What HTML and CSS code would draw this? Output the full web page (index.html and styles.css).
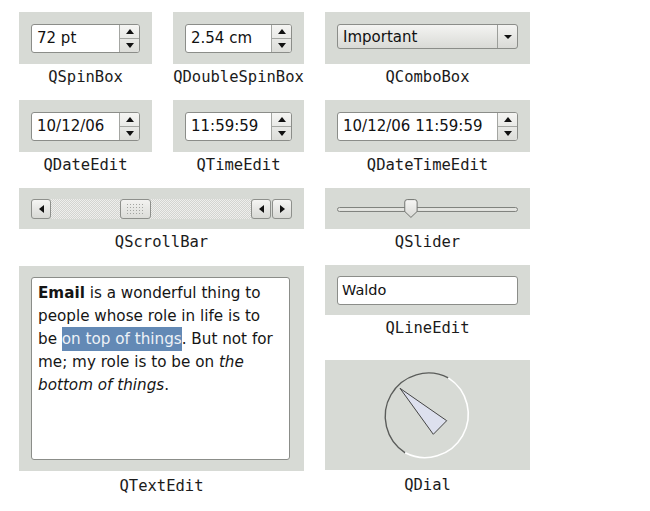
FILE: index.html
```html
<!DOCTYPE html>
<html lang="en">
<head>
  <meta charset="UTF-8" />
  <title>Widget Gallery</title>
  <link rel="stylesheet" href="styles.css">
</head>
<body>
  <div class="gallery">
    <div class="cell">
      <div class="panel">
        <div class="spin"><span class="field">72 pt</span><span class="arrows"><i class="up"></i><i class="down"></i></span></div>
      </div>
      <div class="caption">QSpinBox</div>
    </div>

    <div class="cell">
      <div class="panel">
        <div class="spin"><span class="field">2.54 cm</span><span class="arrows"><i class="up"></i><i class="down"></i></span></div>
      </div>
      <div class="caption">QDoubleSpinBox</div>
    </div>

    <div class="cell">
      <div class="panel">
        <div class="combo"><span class="field">Important</span><span class="drop"><i class="down"></i></span></div>
      </div>
      <div class="caption">QComboBox</div>
    </div>

    <div class="cell">
      <div class="panel">
        <div class="spin"><span class="field">10/12/06</span><span class="arrows"><i class="up"></i><i class="down"></i></span></div>
      </div>
      <div class="caption">QDateEdit</div>
    </div>

    <div class="cell">
      <div class="panel">
        <div class="spin"><span class="field">11:59:59</span><span class="arrows"><i class="up"></i><i class="down"></i></span></div>
      </div>
      <div class="caption">QTimeEdit</div>
    </div>

    <div class="cell">
      <div class="panel">
        <div class="spin"><span class="field">10/12/06 11:59:59</span><span class="arrows"><i class="up"></i><i class="down"></i></span></div>
      </div>
      <div class="caption">QDateTimeEdit</div>
    </div>

    <div class="cell wide">
      <div class="panel short">
        <div class="scrollbar">
          <span class="sb-btn"><i class="left"></i></span>
          <span class="sb-track"><span class="sb-handle"><span class="grip"></span></span></span>
          <span class="sb-btn"><i class="left"></i></span>
          <span class="sb-btn"><i class="right"></i></span>
        </div>
      </div>
      <div class="caption">QScrollBar</div>
    </div>

    <div class="cell">
      <div class="panel short">
        <svg class="slider" width="183" height="20" viewBox="0 0 183 20">
          <defs>
            <linearGradient id="knob" x1="0" y1="0" x2="0" y2="1">
              <stop offset="0" stop-color="#f6f6f4" />
              <stop offset="1" stop-color="#d9dad6" />
            </linearGradient>
          </defs>
          <rect x="0.5" y="8.5" width="182" height="4" rx="2" fill="#e4e5e1" stroke="#7d7f7b" />
          <path d="M68.5 3 Q68.5 0.5 71 0.5 H78.5 Q81 0.5 81 3 V12.5 L74.75 18.5 L68.5 12.5 Z" fill="url(#knob)" stroke="#6f716d" />
        </svg>
      </div>
      <div class="caption">QSlider</div>
    </div>

    <div class="cell wide">
      <div class="panel tall">
        <div class="textedit"><b>Email</b> is a wonderful thing to<br>
          people whose role in life is to<br>
          be <span class="sel">on top of things</span>. But not for<br>
          me; my role is to be on <i>the</i><br>
          <i>bottom of things</i>.</div>
      </div>
      <div class="caption low">QTextEdit</div>
    </div>

    <div class="stack">
      <div class="cell line-cell">
        <div class="panel line">
          <div class="lineedit">Waldo</div>
        </div>
        <div class="caption">QLineEdit</div>
      </div>
      <div class="cell">
        <div class="panel dial">
          <svg width="205" height="110" viewBox="0 0 205 110">
            <path d="M80.2 92.8 A43.3 43.3 0 0 1 123.3 17.8" fill="none" stroke="#5a5c5a" stroke-width="1.4" />
            <path d="M123.3 17.8 A43.3 43.3 0 0 1 80.2 92.8" fill="none" stroke="#ffffff" stroke-width="1.6" />
            <polygon points="75,28.3 121.7,60.7 108.3,74.3" fill="#dde0ee" stroke="#444" stroke-width="1" stroke-linejoin="round" />
          </svg>
        </div>
        <div class="caption low">QDial</div>
      </div>
    </div>
  </div>
</body>
</html>
```

FILE: styles.css
```css
body {
  margin: 0;
  background: #fff;
  font-family: "DejaVu Sans", "Liberation Sans", sans-serif;
  color: #111;
}

.gallery {
  display: grid;
  grid-template-columns: 133px 131px 205px;
  grid-template-rows: 88px 88px 77px auto;
  column-gap: 21px;
  padding: 12px 0 0 19px;
}

.wide {
  grid-column: span 2;
}

.stack {
  display: flex;
  flex-direction: column;
}

.line-cell {
  height: 95px;
}

.panel {
  background: #d7dad5;
  height: 52px;
  display: flex;
  align-items: center;
  padding: 0 12px;
}

.panel.short {
  height: 41px;
}

.panel.line {
  height: 50px;
}

.panel.tall {
  height: 205px;
  margin-top: 1px;
  padding: 11px 14px 11px 12px;
  box-sizing: border-box;
  align-items: stretch;
}

.panel.dial {
  height: 110px;
  padding: 0;
}

.caption {
  margin-top: 5px;
  font: 15.5px/17px "DejaVu Sans Mono", monospace;
  text-align: center;
  color: #1b1b1b;
}

.caption.low {
  margin-top: 7px;
}

/* spin boxes and combo */
.spin,
.combo,
.lineedit {
  flex: 1;
  display: flex;
  box-sizing: border-box;
  border: 1px solid #8b8d89;
  border-radius: 3px;
  font-size: 15px;
}

.spin {
  height: 29px;
  background: #fff;
}

.field {
  flex: 1;
  display: flex;
  align-items: center;
  padding-left: 5px;
  white-space: nowrap;
}

.arrows {
  width: 19px;
  display: flex;
  flex-direction: column;
  border-left: 1px solid #a4a6a2;
  background: linear-gradient(#f5f5f3, #dcddd9);
  border-radius: 0 2px 2px 0;
}

.arrows i {
  flex: 1;
  display: flex;
  align-items: center;
  justify-content: center;
}

.arrows i + i {
  border-top: 1px solid #a4a6a2;
}

.up::before,
.down::before {
  content: "";
  border-left: 4px solid transparent;
  border-right: 4px solid transparent;
}

.up::before {
  border-bottom: 5px solid #111;
}

.down::before {
  border-top: 5px solid #111;
}

.combo {
  height: 25px;
  margin-top: -3px;
  background: linear-gradient(#f4f4f2, #d9dad6);
}

.drop {
  width: 19px;
  border-left: 1px solid #9c9e9a;
  display: flex;
  align-items: center;
  justify-content: center;
}

.drop i {
  display: flex;
}

.drop .down::before {
  border-top-width: 4px;
}

.lineedit {
  height: 29px;
  background: #fff;
  align-items: center;
  padding-left: 4px;
  font-size: 14.5px;
}

/* scroll bar */
.scrollbar {
  flex: 1;
  height: 20px;
  display: flex;
}

.sb-btn {
  width: 20px;
  box-sizing: border-box;
  border: 1px solid #8e908c;
  border-radius: 3px;
  background: linear-gradient(#f5f5f3, #d8d9d5);
  display: flex;
  align-items: center;
  justify-content: center;
}

.sb-btn + .sb-btn {
  margin-left: 1px;
}

.left::before,
.right::before {
  content: "";
  display: block;
  border-top: 4px solid transparent;
  border-bottom: 4px solid transparent;
}

.left::before {
  border-right: 5px solid #111;
}

.right::before {
  border-left: 5px solid #111;
}

.sb-track {
  flex: 1;
  display: flex;
  background: repeating-conic-gradient(#d3d4d0 0 25%, #efefed 0 50%) 0 0 / 2px 2px;
}

.sb-handle {
  width: 31px;
  margin-left: 69px;
  box-sizing: border-box;
  border: 1px solid #8e908c;
  border-radius: 3px;
  background: linear-gradient(#f2f2f0, #dcddd9);
  display: flex;
  align-items: center;
  justify-content: center;
}

.grip {
  width: 19px;
  height: 11px;
  background-image: radial-gradient(circle, #a2a4a0 0.8px, transparent 1px);
  background-size: 3px 3px;
}

.slider {
  display: block;
}

/* text edit */
.textedit {
  flex: 1;
  background: #fff;
  border: 1px solid #8b8d89;
  border-radius: 3px;
  padding: 4px 3px 0 6px;
  font-size: 15.2px;
  line-height: 23px;
  color: #151515;
  white-space: nowrap;
}

.sel {
  background: #6389b5;
  color: #eef2f7;
  padding: 3px 0;
}
```
